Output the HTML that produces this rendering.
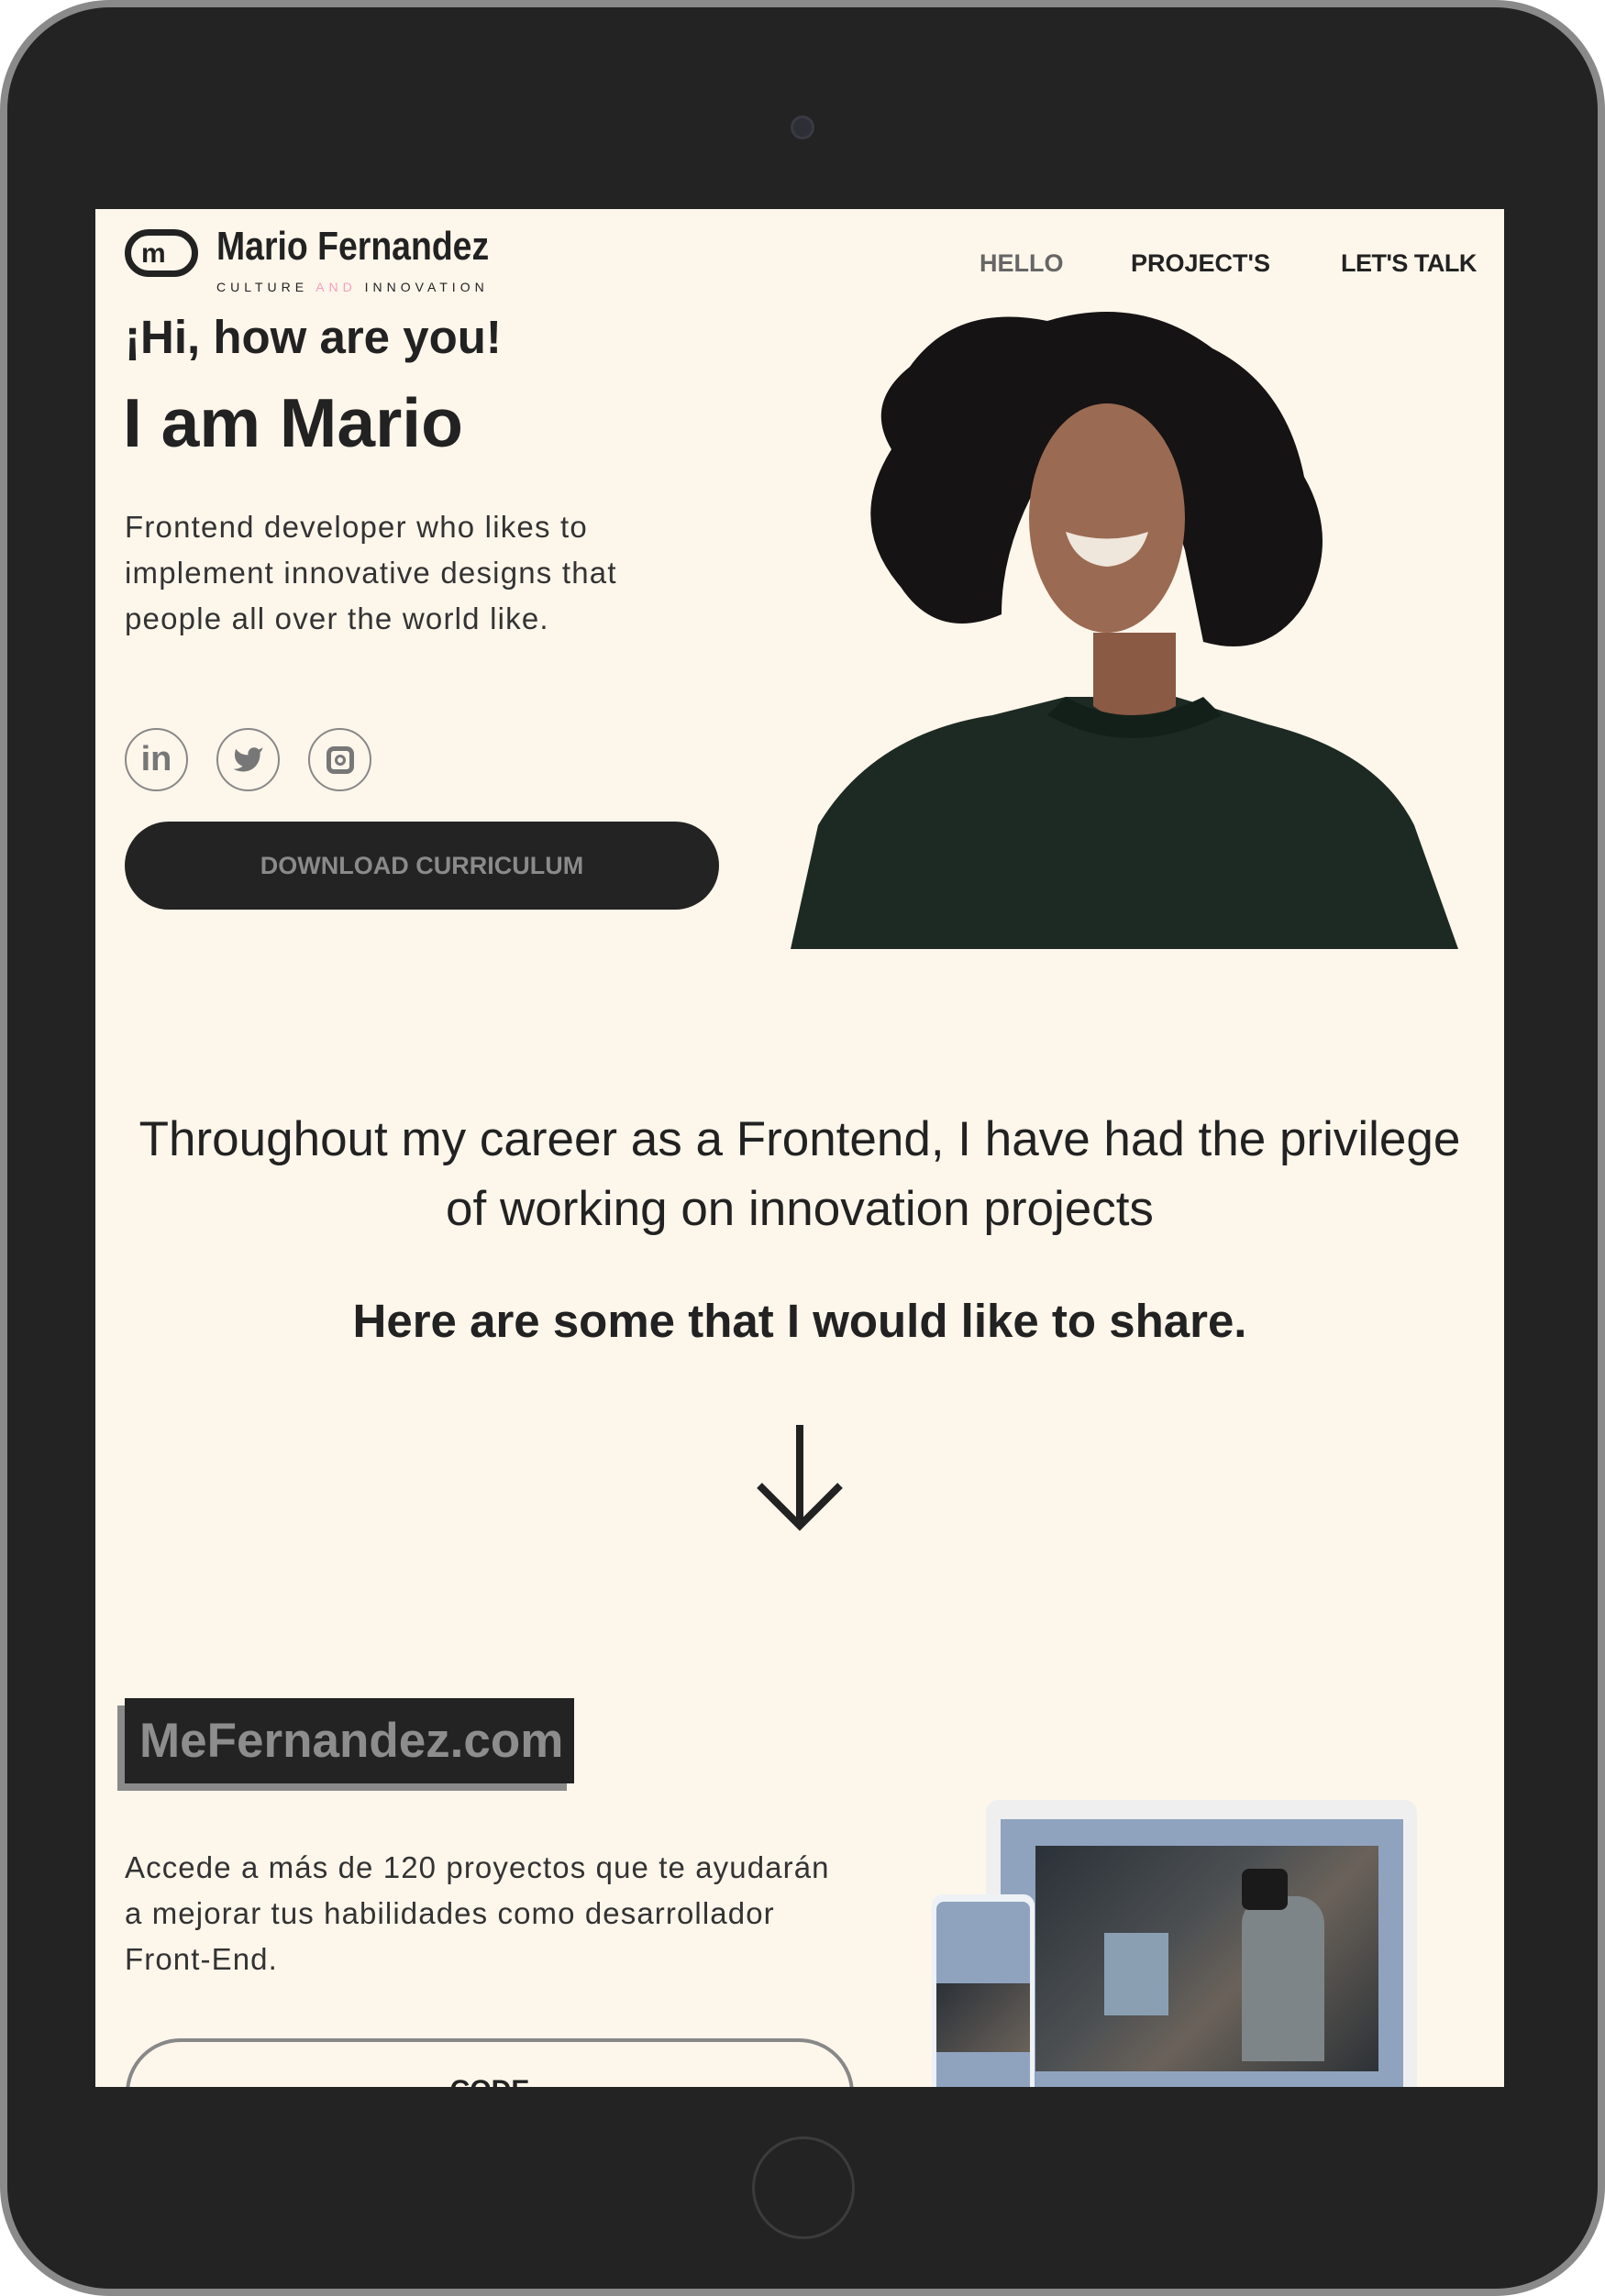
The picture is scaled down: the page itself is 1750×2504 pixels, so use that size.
<!DOCTYPE html>
<html><head><meta charset="utf-8"><style>
*{margin:0;padding:0;box-sizing:border-box}
body{width:1750px;height:2504px;background:#fff;position:relative;overflow:hidden;font-family:"Liberation Sans",sans-serif}
.dev{position:absolute;left:0;top:0;width:1750px;height:2504px;border-radius:120px;background:#8a8a8a}
.dev2{position:absolute;left:8px;top:8px;width:1734px;height:2488px;border-radius:112px;background:#232323}
.scr{position:absolute;left:104px;top:228px;width:1536px;height:2048px;background:#fdf6eb;overflow:hidden;color:#222}
.a{position:absolute;white-space:nowrap}
</style></head><body>
<div class="dev"></div><div class="dev2"></div>
<div class="a" style="left:862px;top:126px;width:26px;height:26px;border-radius:50%;background:#2e2e36;border:3px solid #3a3a44"></div>
<div class="a" style="left:820px;top:2330px;width:112px;height:112px;border-radius:50%;border:3px solid #3c3c3c"></div>
<div class="scr">
  <div class="a" style="left:32px;top:22px;width:80px;height:52px;border:7px solid #222;border-radius:26px"></div>
  <div class="a" style="left:50px;top:34px;font:bold 30px 'Liberation Sans';color:#222;line-height:30px">m</div>
  <div class="a" style="left:132px;top:16px;font:bold 44px 'Liberation Sans Narrow','Liberation Sans',sans-serif;transform:scaleX(.85);transform-origin:left;color:#222">Mario Fernandez</div>
  <div class="a" style="left:132px;top:77px;font:14px 'Liberation Sans';letter-spacing:5px;color:#222">CULTURE <span style="color:#f5a0c0">AND</span> INNOVATION</div>
  <div class="a" style="left:964px;top:44px;font:bold 27px 'Liberation Sans';color:#666">HELLO</div>
  <div class="a" style="left:1129px;top:44px;font:bold 27px 'Liberation Sans'">PROJECT'S</div>
  <div class="a" style="left:1358px;top:44px;font:bold 27px 'Liberation Sans';letter-spacing:-0.5px">LET'S TALK</div>
  <div class="a" style="left:32px;top:110px;font:bold 51px 'Liberation Sans'">¡Hi, how are you!</div>
  <div class="a" style="left:30px;top:190px;font:bold 75px 'Liberation Sans'">I am Mario</div>
  <div class="a" style="left:32px;top:322px;font:33px/50px 'Liberation Sans';letter-spacing:1.2px;color:#333">Frontend developer who likes to<br>implement innovative designs that<br>people all over the world like.</div>
  <div class="a" style="left:32px;top:566px;width:69px;height:69px;border-radius:50%;border:2px solid #888;color:#777;font:bold 38px/64px 'Liberation Sans';text-align:center">in</div>
  <div class="a" style="left:132px;top:566px;width:69px;height:69px;border-radius:50%;border:2px solid #888">
    <svg width="65" height="65" viewBox="0 0 24 24"><path transform="translate(5.5 5.5) scale(.54)" fill="#777" d="M23 3a10.9 10.9 0 0 1-3.1 1.5 4.5 4.5 0 0 0-7.9 3v1A10.7 10.7 0 0 1 3 4s-4 9 5 13a11.6 11.6 0 0 1-7 2c9 5 20 0 20-11.5a4.5 4.5 0 0 0-.1-.8A7.7 7.7 0 0 0 23 3z"/></svg></div>
  <div class="a" style="left:232px;top:566px;width:69px;height:69px;border-radius:50%;border:2px solid #888">
    <div class="a" style="left:18px;top:18px;width:30px;height:30px;border:5px solid #777;border-radius:8px"></div>
    <div class="a" style="left:27px;top:27px;width:12px;height:12px;border:3px solid #777;border-radius:50%"></div></div>
  <div class="a" style="left:32px;top:668px;width:648px;height:96px;border-radius:48px;background:#232323;color:#8a8a8a;font:bold 27px/96px 'Liberation Sans';text-align:center">DOWNLOAD CURRICULUM</div>
  <svg class="a" style="left:758px;top:112px" width="730" height="695" viewBox="0 0 730 695">
    <path d="M0 695 L30 560 Q90 460 220 440 L300 420 L420 420 L520 450 Q640 480 680 560 L728 695Z" fill="#1d2a24"/>
    <path d="M330 350 L330 430 Q370 460 420 430 L420 350Z" fill="#8a5a45"/>
    <path d="M300 420 Q370 460 450 420 L470 440 Q370 490 280 440Z" fill="#13201a"/>
    <path d="M130 60 Q180 -10 280 10 Q380 -20 460 40 Q540 80 560 180 Q600 250 560 320 Q520 380 450 360 L430 260 Q400 160 280 170 Q230 250 230 330 Q160 360 120 300 Q60 230 110 150 Q80 100 130 60Z" fill="#151313"/>
    <ellipse cx="345" cy="225" rx="85" ry="125" fill="#9b6a52"/>
    <path d="M300 240 Q345 255 390 240 Q380 275 345 278 Q310 275 300 240Z" fill="#efe6dc"/>
  </svg>
  <div class="a" style="left:0;width:1536px;top:977px;text-align:center;font:53px/76px 'Liberation Sans';color:#222">Throughout my career as a Frontend, I have had the privilege<br>of working on innovation projects</div>
  <div class="a" style="left:0;width:1536px;top:1183px;text-align:center;font:bold 51px 'Liberation Sans'">Here are some that I would like to share.</div>
  <svg class="a" style="left:718px;top:1322px" width="100" height="124" viewBox="0 0 100 124"><path d="M50 4 V114 M6 70 L50 114 L94 70" stroke="#222" stroke-width="8" fill="none"/></svg>
  <div class="a" style="left:24px;top:1632px;width:490px;height:93px;background:#8a8a8a"></div>
  <div class="a" style="left:32px;top:1624px;width:490px;height:93px;background:#232323;color:#8d8d8d;font:bold 53px/93px 'Liberation Sans';padding-left:16px">MeFernandez.com</div>
  <div class="a" style="left:32px;top:1784px;font:33px/50px 'Liberation Sans';letter-spacing:1.1px;color:#333">Accede a más de 120 proyectos que te ayudarán<br>a mejorar tus habilidades como desarrollador<br>Front-End.</div>
  <div class="a" style="left:33px;top:1995px;width:794px;height:160px;border:4px solid #888;border-radius:60px;text-align:center;font:bold 30px 'Liberation Sans';padding-top:36px">CODE</div>
  <div class="a" style="left:971px;top:1735px;width:470px;height:340px;background:#efefef;border-radius:14px"></div>
  <div class="a" style="left:987px;top:1756px;width:439px;height:300px;background:#8fa3bf"></div>
  <div class="a" style="left:1025px;top:1785px;width:374px;height:246px;background:linear-gradient(135deg,#2b3138,#4b4f52 40%,#6a625a 60%,#2d3236)"></div>
  <div class="a" style="left:1100px;top:1880px;width:70px;height:90px;background:#8aa0b2"></div>
  <div class="a" style="left:1250px;top:1840px;width:90px;height:180px;background:#7d8588;border-radius:30px 30px 0 0"></div>
  <div class="a" style="left:1250px;top:1810px;width:50px;height:45px;background:#1a1a1a;border-radius:8px"></div>
  <div class="a" style="left:912px;top:1838px;width:112px;height:220px;background:#eef1f5;border-radius:12px"></div>
  <div class="a" style="left:917px;top:1846px;width:102px;height:210px;background:#8fa3bf;border-radius:8px"></div>
  <div class="a" style="left:917px;top:1935px;width:102px;height:75px;background:linear-gradient(135deg,#2b3138,#6a625a)"></div>
</div>
</body></html>
